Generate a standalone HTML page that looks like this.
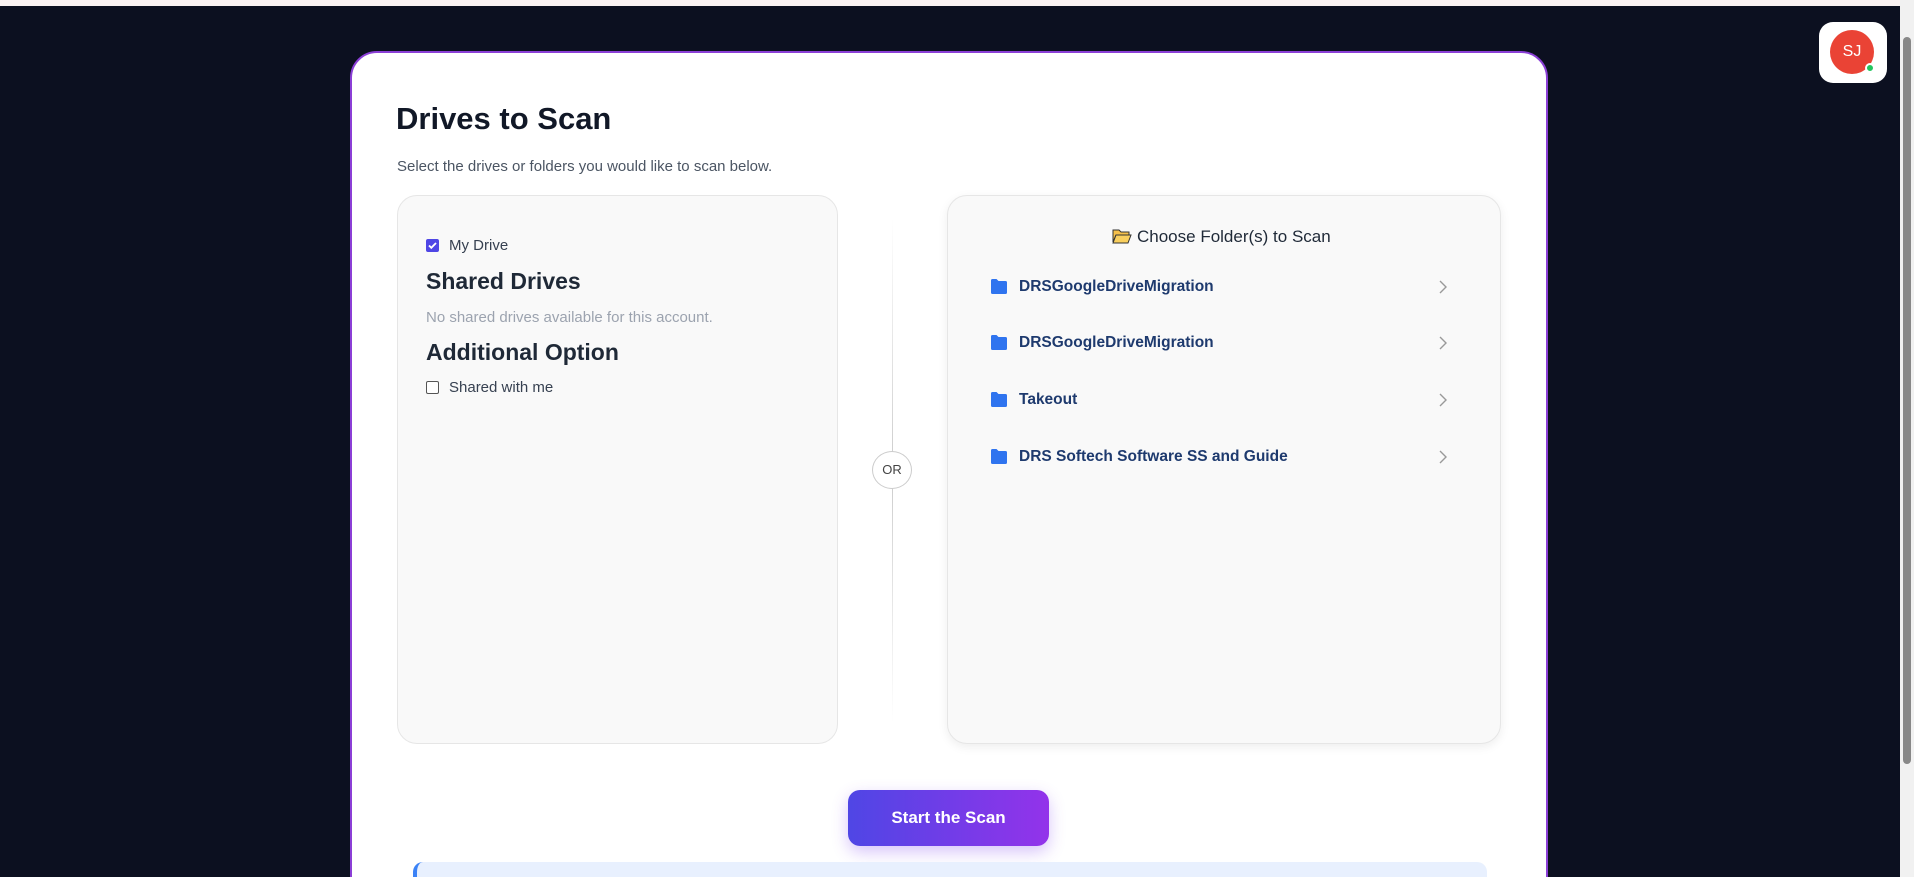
<!DOCTYPE html>
<html><head><meta charset="utf-8"><style>
*{box-sizing:border-box;margin:0;padding:0}
html,body{width:1914px;height:877px;overflow:hidden}
body{background:#0c1020;font-family:"Liberation Sans",sans-serif;position:relative}
.top{position:absolute;left:0;top:0;width:1900px;height:6px;background:#fbf3f3}
.card{position:absolute;left:350px;top:51px;width:1198px;height:860px;background:#fff;border:2px solid #8b3fd6;border-radius:27px}
h1{position:absolute;left:396px;top:101px;font-size:31px;font-weight:bold;color:#111827}
.sub{position:absolute;left:397px;top:158px;font-size:15px;color:#4b5563}
.lp{position:absolute;left:397px;top:195px;width:441px;height:549px;background:#f9f9f9;border:1px solid #e6e6e6;border-radius:20px}
.rp{position:absolute;left:947px;top:195px;width:554px;height:549px;background:#f9f9f9;border:1px solid #e6e6e6;border-radius:20px;box-shadow:0 3px 10px rgba(0,0,0,.07)}
.cb{position:absolute;width:13px;height:13px;border:1px solid #555;border-radius:2px;background:#fff}
.t{position:absolute;font-size:15px;color:#374151}
.h{position:absolute;font-size:23px;font-weight:bold;color:#1f2937}
.line{position:absolute;left:892px;top:218px;width:1px;height:505px;background:linear-gradient(#fff,#ccc,#fff)}
.or{position:absolute;left:872px;top:451px;width:40px;height:38px;border:1px solid #ccc;border-radius:50%;background:#fff;font-size:13px;color:#444;text-align:center;line-height:36px}
.it{position:absolute;left:990px;font-size:15.5px;font-weight:bold;color:#1e3a6e}
.it svg.f{position:absolute;left:0;top:0}
.it span{position:absolute;left:29px;top:0;white-space:nowrap}
.ch{position:absolute;left:1437px}
.btn{position:absolute;left:848px;top:790px;width:201px;height:56px;border-radius:12px;background:linear-gradient(90deg,#4f46e5,#9333ea);color:#fff;font-weight:bold;font-size:17px;text-align:center;line-height:56px;box-shadow:0 6px 16px rgba(124,58,237,.3)}
.info{position:absolute;left:413px;top:862px;width:1074px;height:40px;background:#e8f0fe;border-left:4px solid #3b82f6;border-radius:10px}
.av{position:absolute;left:1819px;top:22px;width:68px;height:61px;background:#fff;border-radius:14px}
.av .c{position:absolute;left:11px;top:8px;width:44px;height:44px;border-radius:50%;background:#ea4335;color:#fff;font-size:16px;text-align:center;line-height:44px}
.av .d{position:absolute;left:46px;top:41px;width:10px;height:10px;border-radius:50%;background:#22c55e;border:2px solid #fff}
.sb{position:absolute;left:1900px;top:0;width:14px;height:877px;background:#f1f1f1}
.th{position:absolute;left:1903px;top:37px;width:8px;height:727px;background:#888;border-radius:4px}
</style></head><body>
<div class="top"></div>
<div class="card"></div>
<h1>Drives to Scan</h1>
<div class="sub">Select the drives or folders you would like to scan below.</div>
<div class="lp"></div>
<div class="cb" style="left:426px;top:239px;background:#4f46e5;border-color:#4f46e5"><svg width="11" height="11" viewBox="0 0 11 11" style="position:absolute;left:0;top:0"><path d="M2 5.5l2.3 2.3L9 3" stroke="#fff" stroke-width="1.8" fill="none"/></svg></div>
<div class="t" style="left:449px;top:237px">My Drive</div>
<div class="h" style="left:426px;top:268px">Shared Drives</div>
<div class="t" style="left:426px;top:309px;color:#9ca3af">No shared drives available for this account.</div>
<div class="h" style="left:426px;top:339px">Additional Option</div>
<div class="cb" style="left:426px;top:381px"></div>
<div class="t" style="left:449px;top:379px">Shared with me</div>
<div class="line"></div>
<div class="or">OR</div>
<div class="rp"></div>
<div style="position:absolute;left:1112px;top:227px;font-size:17px;color:#1f2937;white-space:nowrap"><svg width="20" height="16" viewBox="0 0 20 16" style="vertical-align:-2px;margin-right:5px"><path d="M1 2h6l2 2h8v3H4L1 14z" fill="#f6c04a" stroke="#333" stroke-width="1"/><path d="M4 7h15l-3 8H1z" fill="#f9cf5e" stroke="#333" stroke-width="1"/></svg>Choose Folder(s) to Scan</div>
<div class="it" style="top:278px"><svg class="f" width="18" height="17" viewBox="0 0 18 17"><path d="M1 2.5Q1 1 2.5 1h4l2 2h7Q17 3 17 4.5v10Q17 16 15.5 16h-13Q1 16 1 14.5z" fill="#2f74ef"/></svg><span>DRSGoogleDriveMigration</span></div>
<div class="it" style="top:334px"><svg class="f" width="18" height="17" viewBox="0 0 18 17"><path d="M1 2.5Q1 1 2.5 1h4l2 2h7Q17 3 17 4.5v10Q17 16 15.5 16h-13Q1 16 1 14.5z" fill="#2f74ef"/></svg><span>DRSGoogleDriveMigration</span></div>
<div class="it" style="top:391px"><svg class="f" width="18" height="17" viewBox="0 0 18 17"><path d="M1 2.5Q1 1 2.5 1h4l2 2h7Q17 3 17 4.5v10Q17 16 15.5 16h-13Q1 16 1 14.5z" fill="#2f74ef"/></svg><span>Takeout</span></div>
<div class="it" style="top:448px"><svg class="f" width="18" height="17" viewBox="0 0 18 17"><path d="M1 2.5Q1 1 2.5 1h4l2 2h7Q17 3 17 4.5v10Q17 16 15.5 16h-13Q1 16 1 14.5z" fill="#2f74ef"/></svg><span>DRS Softech Software SS and Guide</span></div>
<svg class="ch" style="top:279px" width="12" height="16" viewBox="0 0 12 16"><path d="M3 2l6 6-6 6" stroke="#999" stroke-width="1.4" fill="none"/></svg>
<svg class="ch" style="top:335px" width="12" height="16" viewBox="0 0 12 16"><path d="M3 2l6 6-6 6" stroke="#999" stroke-width="1.4" fill="none"/></svg>
<svg class="ch" style="top:392px" width="12" height="16" viewBox="0 0 12 16"><path d="M3 2l6 6-6 6" stroke="#999" stroke-width="1.4" fill="none"/></svg>
<svg class="ch" style="top:449px" width="12" height="16" viewBox="0 0 12 16"><path d="M3 2l6 6-6 6" stroke="#999" stroke-width="1.4" fill="none"/></svg>
<div class="btn">Start the Scan</div>
<div class="info"></div>
<div class="av"><div class="c">SJ</div><div class="d"></div></div>
<div class="sb"></div><div class="th"></div>
</body></html>
